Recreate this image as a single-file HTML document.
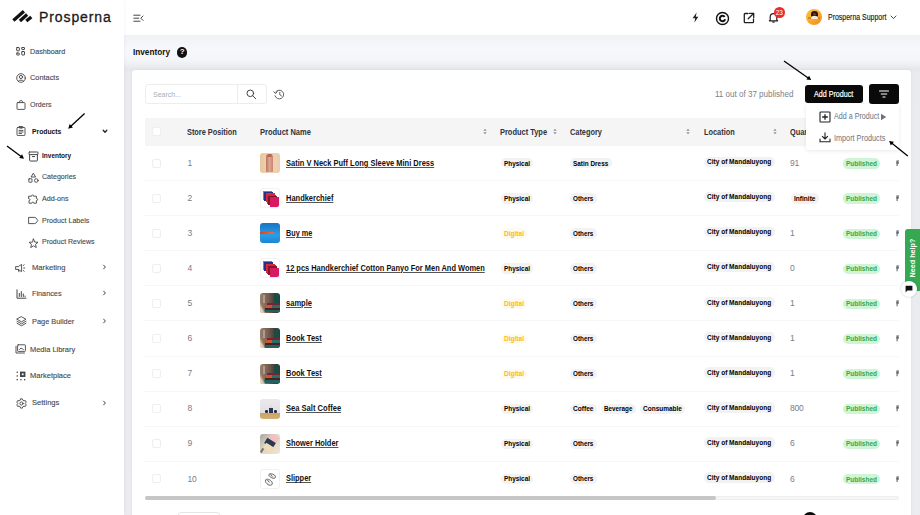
<!DOCTYPE html>
<html><head><meta charset="utf-8">
<style>
*{box-sizing:border-box;margin:0;padding:0}
html,body{width:920px;height:515px;overflow:hidden;background:#f0f1f5;font-family:"Liberation Sans",sans-serif;position:relative}
.abs{position:absolute}
#sidebar{position:absolute;left:0;top:0;width:124px;height:515px;background:#fff;box-shadow:1px 0 3px rgba(0,0,0,0.04)}
#header{position:absolute;left:124px;top:0;width:796px;height:34.5px;background:#fff}
#content{position:absolute;left:124px;top:34px;width:796px;height:481px;background:linear-gradient(#f0f1f5 0px,#f3f4f8 6px,#f7f8fb 16px,#f4f5f8 26px,#e6e7eb 35.5px,#eaebef 40px,#ebecf0 100%)}
.nav{position:absolute;height:10px;line-height:10px;color:#484848;white-space:nowrap;-webkit-text-stroke:0.12px #484848;transform-origin:0 50%}
.nav.b{font-weight:bold;color:#111;-webkit-text-stroke:0}
.ico{position:absolute}
#card{position:absolute;left:132px;top:70px;width:779px;height:460px;background:#fff;border-radius:3px;box-shadow:0 0 3px rgba(30,40,60,0.07)}
.th{position:absolute;font-size:8.4px;font-weight:bold;color:#2d3340;white-space:nowrap;line-height:10px;height:10px;transform-origin:0 50%}
.cell{position:absolute;white-space:nowrap;line-height:10px;height:10px}
.num{font-size:8.5px;letter-spacing:-0.2px;color:#777d88}
.pill{position:absolute;height:10.4px;line-height:10.4px;padding:0 0 0 3.2px;border-radius:5.2px;background:#f2f2f2;font-size:8.1px;font-weight:bold;color:#000;white-space:nowrap}
.pill span{display:inline-block;transform-origin:0 50%;position:relative;top:0.6px}
.pub{background:#cdf5d6;color:#33a852}
.dig{background:#fffaef;color:#fbb915}
.pname{position:absolute;font-size:8.7px;font-weight:bold;color:#111;text-decoration:underline;text-decoration-color:#555;text-decoration-thickness:0.8px;text-underline-offset:1px;white-space:nowrap;line-height:11px;height:11px;transform-origin:0 50%}
.cb{position:absolute;width:9px;height:9px;border:1px solid #efefef;border-radius:2px;background:#fff}
.sep{position:absolute;left:145px;width:754px;height:1px;background:#f6f6f6}
.thumb{position:absolute;left:260px;width:20px;height:20px;border-radius:3px;overflow:hidden}
</style></head>
<body>
<div id="content"></div>
<div id="header"></div>
<div id="sidebar"></div>
<svg class="ico" style="left:0;top:0" width="40" height="30" viewBox="0 0 40 30">
  <path d="M13.4 20.5 L23.9 11.3" stroke="#111" stroke-width="3.3"/>
  <path d="M19.9 20.9 L27.1 14.5" stroke="#111" stroke-width="3.3"/>
  <path d="M26.3 21.1 L31.3 16.9" stroke="#111" stroke-width="3.3"/>
</svg>
<div class="abs" style="left:39px;top:8px;font-size:14px;line-height:18px;color:#1a1a1a;letter-spacing:0.9px;-webkit-text-stroke:0.3px #1a1a1a">Prosperna</div>

<div class="nav" style="left:30px;top:46.5px;font-size:7.9px;transform:scaleX(0.9138)">Dashboard</div>
<svg class="ico" style="left:16px;top:46.5px" width="9" height="9" viewBox="0 0 9 9" fill="none" stroke="#444" stroke-width="1.0" stroke-linecap="round" stroke-linejoin="round"><rect x="0.7" y="0.5" width="2.6" height="3.3" rx="0.4"/><rect x="5.8" y="0.5" width="2.7" height="2" rx="0.4"/><rect x="0.7" y="6" width="2.6" height="2" rx="0.4"/><rect x="5.8" y="4.5" width="2.7" height="3.5" rx="0.4"/></svg>
<div class="nav" style="left:30px;top:73.4px;font-size:7.9px;transform:scaleX(0.9337)">Contacts</div>
<svg class="ico" style="left:16px;top:73px" width="10" height="10" viewBox="0 0 10 10" fill="none" stroke="#444" stroke-width="0.9" stroke-linecap="round" stroke-linejoin="round"><circle cx="5" cy="5" r="4.3"/><circle cx="5" cy="4" r="1.6"/><path d="M2.3 8.2 C3 6.6 7 6.6 7.7 8.2"/></svg>
<div class="nav" style="left:30px;top:99.9px;font-size:7.9px;transform:scaleX(0.8950)">Orders</div>
<svg class="ico" style="left:16px;top:99.5px" width="10" height="10" viewBox="0 0 10 10" fill="none" stroke="#444" stroke-width="0.9" stroke-linecap="round" stroke-linejoin="round"><rect x="1" y="2.6" width="8" height="6.8" rx="0.8"/><path d="M3.3 2.6 V1.8 C3.3 0.2 6.7 0.2 6.7 1.8 V2.6"/></svg>
<div class="nav b" style="left:32px;top:127.2px;font-size:8.0px;transform:scaleX(0.8478)">Products</div>
<svg class="ico" style="left:16px;top:126px" width="10" height="10" viewBox="0 0 10 10" fill="none" stroke="#444" stroke-width="0.9" stroke-linecap="round" stroke-linejoin="round"><rect x="1" y="1.4" width="8" height="8.2" rx="0.9"/><rect x="3.2" y="0.5" width="3.6" height="1.6" rx="0.4"/><path d="M3 4.4 H7 M3 6 H7 M3 7.6 H5.6"/></svg>
<svg class="ico" style="left:101.5px;top:128.8px" width="6" height="5" viewBox="0 0 6 5" fill="none" stroke="#222" stroke-width="1.3" stroke-linecap="round" stroke-linejoin="round"><path d="M1.2 1.3 L3 3.2 L4.8 1.3"/></svg>
<div class="nav b" style="left:42px;top:150.7px;font-size:8.0px;transform:scaleX(0.8111)">Inventory</div>
<svg class="ico" style="left:28px;top:150.5px" width="11" height="11" viewBox="0 0 11 11" fill="none" stroke="#444" stroke-width="1.0" stroke-linecap="round" stroke-linejoin="round"><rect x="1" y="1" width="9" height="2.6" rx="0.6"/><path d="M1.6 3.6 V9.4 C1.6 9.8 1.9 10 2.3 10 H8.7 C9.1 10 9.4 9.8 9.4 9.4 V3.6"/><path d="M4.3 5.6 H6.7"/></svg>
<div class="nav" style="left:42px;top:172.1px;font-size:7.9px;transform:scaleX(0.8928)">Categories</div>
<svg class="ico" style="left:28px;top:172.5px" width="11" height="10" viewBox="0 0 11 10" fill="none" stroke="#444" stroke-width="0.9" stroke-linecap="round" stroke-linejoin="round"><path d="M5.5 0.6 L7.6 4 H3.4 Z"/><rect x="0.8" y="5.8" width="3.2" height="3.4" rx="0.4"/><circle cx="8.3" cy="7.5" r="1.8"/></svg>
<div class="nav" style="left:42px;top:193.8px;font-size:7.9px;transform:scaleX(0.9039)">Add-ons</div>
<svg class="ico" style="left:28px;top:193.5px" width="11" height="10" viewBox="0 0 11 10" fill="none" stroke="#444" stroke-width="0.9" stroke-linecap="round" stroke-linejoin="round"><path d="M1 2.2 H3.6 C3.3 0.6 5.9 0.6 5.6 2.2 H8.4 V4.6 C10 4.3 10 6.9 8.4 6.6 V9.2 H5.8 C6.1 7.8 3.5 7.8 3.8 9.2 H1 V6.6 C2.4 6.9 2.4 4.3 1 4.6 Z"/></svg>
<div class="nav" style="left:42px;top:215.6px;font-size:7.9px;transform:scaleX(0.8996)">Product Labels</div>
<svg class="ico" style="left:28px;top:216px" width="11" height="9" viewBox="0 0 11 9" fill="none" stroke="#444" stroke-width="0.9" stroke-linecap="round" stroke-linejoin="round"><path d="M1 1.4 H6.8 C7.3 1.4 7.6 1.6 7.9 1.9 L9.8 4.5 L7.9 7.1 C7.6 7.4 7.3 7.6 6.8 7.6 H1 Z"/></svg>
<div class="nav" style="left:42px;top:237.1px;font-size:7.9px;transform:scaleX(0.8855)">Product Reviews</div>
<svg class="ico" style="left:28px;top:237.5px" width="11" height="11" viewBox="0 0 11 11" fill="none" stroke="#444" stroke-width="0.9" stroke-linecap="round" stroke-linejoin="round"><path d="M5.5 1 L6.8 4.1 L10 4.3 L7.5 6.4 L8.3 9.6 L5.5 7.8 L2.7 9.6 L3.5 6.4 L1 4.3 L4.2 4.1 Z"/></svg>
<div class="nav" style="left:31.7px;top:262.5px;font-size:7.9px;transform:scaleX(0.9688)">Marketing</div>
<svg class="ico" style="left:15px;top:262.5px" width="11" height="10" viewBox="0 0 11 10" fill="none" stroke="#444" stroke-width="0.9" stroke-linecap="round" stroke-linejoin="round"><path d="M1 3.6 H3.2 L6.6 1.4 V8.6 L3.2 6.4 H1 Z"/><path d="M3.2 6.4 L4 8.8"/><path d="M8.4 2.4 L9.2 1.8 M8.7 5 H9.8 M8.4 7.6 L9.2 8.2"/></svg>
<svg class="ico" style="left:102px;top:263.9px" width="5" height="6" viewBox="0 0 5 6" fill="none" stroke="#3a3a3a" stroke-width="0.95" stroke-linecap="round" stroke-linejoin="round"><path d="M1.6 1.1 L3.4 3 L1.6 4.9"/></svg>
<div class="nav" style="left:31.7px;top:289.0px;font-size:7.9px;transform:scaleX(0.9229)">Finances</div>
<svg class="ico" style="left:15.5px;top:289px" width="11" height="10" viewBox="0 0 11 10" fill="none" stroke="#444" stroke-width="1.0" stroke-linecap="round" stroke-linejoin="round"><path d="M1 0.8 V9.2 H10"/><path d="M3.3 7.5 V4.4 M5.3 7.5 V2.6 M7.3 7.5 V5 M9.1 7.5 V7"/></svg>
<svg class="ico" style="left:102px;top:290.4px" width="5" height="6" viewBox="0 0 5 6" fill="none" stroke="#3a3a3a" stroke-width="0.95" stroke-linecap="round" stroke-linejoin="round"><path d="M1.6 1.1 L3.4 3 L1.6 4.9"/></svg>
<div class="nav" style="left:31.7px;top:316.8px;font-size:7.9px;transform:scaleX(0.9353)">Page Builder</div>
<svg class="ico" style="left:15.5px;top:316px" width="11" height="11" viewBox="0 0 11 11" fill="none" stroke="#444" stroke-width="0.9" stroke-linecap="round" stroke-linejoin="round"><path d="M5.5 0.8 L10 3.3 L5.5 5.8 L1 3.3 Z"/><path d="M1 5.3 L5.5 7.8 L10 5.3"/><path d="M1 7.3 L5.5 9.8 L10 7.3"/></svg>
<svg class="ico" style="left:102px;top:318.2px" width="5" height="6" viewBox="0 0 5 6" fill="none" stroke="#3a3a3a" stroke-width="0.95" stroke-linecap="round" stroke-linejoin="round"><path d="M1.6 1.1 L3.4 3 L1.6 4.9"/></svg>
<div class="nav" style="left:29.9px;top:344.5px;font-size:7.9px;transform:scaleX(0.9462)">Media Library</div>
<svg class="ico" style="left:15px;top:344px" width="11" height="10" viewBox="0 0 11 10" fill="none" stroke="#444" stroke-width="0.9" stroke-linecap="round" stroke-linejoin="round"><path d="M1 2.3 V9 H9.5"/><rect x="2.6" y="0.8" width="7.8" height="6.6" rx="0.6"/><path d="M4.5 5.5 L6 4 L8.4 5.5"/></svg>
<div class="nav" style="left:29.9px;top:371.2px;font-size:7.9px;transform:scaleX(0.9531)">Marketplace</div>
<svg class="ico" style="left:16px;top:371px" width="10" height="10" viewBox="0 0 10 10"><g fill="#444"><rect x="0.6" y="0.6" width="1.3" height="1.3"/><rect x="0.6" y="4.3" width="1.3" height="1.3"/><rect x="0.6" y="8" width="1.3" height="1.3"/><rect x="4.3" y="8" width="1.3" height="1.3"/><rect x="8" y="8" width="1.3" height="1.3"/><rect x="4" y="0.6" width="5.4" height="5.4"/></g><rect x="5.8" y="2.4" width="1.8" height="1.8" fill="#fff"/></svg>
<div class="nav" style="left:31.7px;top:398.3px;font-size:7.9px;transform:scaleX(0.9594)">Settings</div>
<svg class="ico" style="left:15.5px;top:397.5px" width="11" height="11" viewBox="0 0 11 11" fill="none" stroke="#444" stroke-width="0.9" stroke-linecap="round" stroke-linejoin="round"><path d="M4.6 0.9 H6.4 L6.8 2.2 L8 2.9 L9.3 2.5 L10.2 4.1 L9.2 5.5 L10.2 6.9 L9.3 8.5 L8 8.1 L6.8 8.8 L6.4 10.1 H4.6 L4.2 8.8 L3 8.1 L1.7 8.5 L0.8 6.9 L1.8 5.5 L0.8 4.1 L1.7 2.5 L3 2.9 L4.2 2.2 Z"/><circle cx="5.5" cy="5.5" r="1.6"/></svg>
<svg class="ico" style="left:102px;top:399.7px" width="5" height="6" viewBox="0 0 5 6" fill="none" stroke="#3a3a3a" stroke-width="0.95" stroke-linecap="round" stroke-linejoin="round"><path d="M1.6 1.1 L3.4 3 L1.6 4.9"/></svg>
<svg class="ico" style="left:133px;top:14px" width="11" height="9" viewBox="0 0 11 9" fill="none" stroke="#444" stroke-width="1.0" stroke-linecap="round" stroke-linejoin="round"><path d="M0.8 1.2 H7 M0.8 4.2 H5.8 M0.8 7.2 H7"/><path d="M10 2 L7.8 4.2 L10 6.4"/></svg>
<svg class="ico" style="left:691px;top:12px" width="9" height="11" viewBox="0 0 9 11"><path d="M5.6 0.6 L1.6 6.2 H4.2 L3.4 10.4 L7.4 4.8 H4.8 Z" fill="#222"/></svg>
<svg class="ico" style="left:714.5px;top:10.5px" width="15" height="15" viewBox="0 0 15 15" fill="none" stroke="#111"><circle cx="7.5" cy="7.5" r="6" stroke-width="1.4"/><path d="M9.71 5.95 A2.7 2.7 0 1 0 10.11 8.2" stroke-width="2.0"/></svg>
<svg class="ico" style="left:743px;top:11.5px" width="12" height="12" viewBox="0 0 12 12" fill="none" stroke="#222" stroke-width="1.3" stroke-linecap="round" stroke-linejoin="round"><path d="M5 1.5 H2 C1.6 1.5 1.3 1.8 1.3 2.2 V10 C1.3 10.4 1.6 10.7 2 10.7 H9.8 C10.2 10.7 10.5 10.4 10.5 10 V7"/><path d="M6.5 1.3 H10.7 V5.5"/><path d="M10.5 1.5 L5.2 6.8"/></svg>
<svg class="ico" style="left:768px;top:12px" width="11" height="11" viewBox="0 0 11 11" fill="none" stroke="#222" stroke-width="1.2" stroke-linejoin="round"><path d="M2.2 8.2 V5 C2.2 3 3.6 1.6 5.5 1.6 C7.4 1.6 8.8 3 8.8 5 V8.2 L9.6 8.8 H1.4 Z"/><path d="M4.4 9.6 C4.6 10.3 6.4 10.3 6.6 9.6"/></svg>
<div class="abs" style="left:773.8px;top:7.2px;width:10.8px;height:10.8px;border-radius:50%;background:#ee2b2b;color:#fff;font-size:6.5px;line-height:11px;text-align:center;letter-spacing:-0.2px">23</div>
<div class="abs" style="left:806.2px;top:9px;width:16px;height:16px;border-radius:50%;background:linear-gradient(135deg,#fcc63c,#f9a52a 55%,#f58a1c);overflow:hidden"><div class="abs" style="left:2px;top:8.4px;width:12px;height:1.2px;background:rgba(170,110,40,0.55)"></div><div class="abs" style="left:4.8px;top:1.8px;width:6.6px;height:6.8px;border-radius:50% 50% 40% 40%;background:#2a140e"></div><div class="abs" style="left:6.6px;top:3.6px;width:3.2px;height:3.6px;border-radius:40%;background:#6a3820"></div><div class="abs" style="left:5.2px;top:7.4px;width:6.2px;height:3px;border-radius:2px 2px 1px 1px;background:rgba(255,250,235,0.92)"></div></div>
<div class="abs" style="left:828.00px;top:13.34px;font-size:8.2px;line-height:9.84px;color:#222;white-space:nowrap;transform:scaleX(0.8513);transform-origin:0 50%;-webkit-text-stroke:0.15px #222">Prosperna Support</div>
<svg class="ico" style="left:890.3px;top:15px" width="7" height="5" viewBox="0 0 7 5" fill="none" stroke="#333" stroke-width="0.9" stroke-linecap="round" stroke-linejoin="round"><path d="M1 1 L3.5 3.5 L6 1"/></svg>
<div class="abs" style="left:133.00px;top:46.89px;font-size:9.2px;line-height:11.04px;font-weight:bold;color:#111;white-space:nowrap;transform:scaleX(0.8937);transform-origin:0 50%;">Inventory</div>
<div class="abs" style="left:177px;top:47.2px;width:10.4px;height:10.4px;border-radius:50%;background:#111;color:#fff;font-size:8px;line-height:10.4px;text-align:center;font-weight:bold">?</div>
<div id="card"></div>
<div class="abs" style="left:145px;top:84px;width:122px;height:20px;border:1px solid #ededed;border-radius:3px;background:#fff"></div>
<div class="abs" style="left:237px;top:84px;width:1px;height:20px;background:#ededed"></div>
<div class="abs" style="left:153.30px;top:89.62px;font-size:7.8px;line-height:9.36px;color:#a9aeb6;white-space:nowrap;transform:scaleX(0.8974);transform-origin:0 50%;">Search...</div>
<svg class="ico" style="left:246px;top:89px" width="11" height="11" viewBox="0 0 11 11" fill="none" stroke="#444" stroke-width="1.0" stroke-linecap="round"><circle cx="4.3" cy="4.3" r="3.3"/><path d="M6.8 6.8 L9.8 9.8"/></svg>
<svg class="ico" style="left:272.5px;top:88.5px" width="12" height="11" viewBox="0 0 12 11" fill="none" stroke="#555" stroke-width="0.95" stroke-linecap="round" stroke-linejoin="round"><path d="M2.6 3 A4.4 4.4 0 1 1 2 6.8"/><path d="M0.8 2.8 L2.6 4.6 L4.2 2.6"/><path d="M6.8 3.2 V5.8 L8.4 6.8"/></svg>
<div class="abs" style="left:714.80px;top:88.75px;font-size:8.5px;line-height:10.20px;color:#7a808a;white-space:nowrap;transform:scaleX(0.9458);transform-origin:0 50%;">11 out of 37 published</div>
<div class="abs" style="left:805px;top:85px;width:58px;height:18px;border-radius:3px;background:#0a0a0a"></div>
<div class="abs" style="left:814.40px;top:89.64px;font-size:8.3px;line-height:9.96px;color:#fff;white-space:nowrap;transform:scaleX(0.8579);transform-origin:0 50%;-webkit-text-stroke:0.2px #fff">Add Product</div>
<div class="abs" style="left:869px;top:84px;width:30px;height:20px;border-radius:3px;background:#0a0a0a"></div>
<svg class="ico" style="left:878px;top:89px" width="12" height="10" viewBox="0 0 12 10" stroke="#fff" stroke-width="1.2" stroke-linecap="round"><path d="M1.5 2 H10.5 M3.3 5 H8.7 M5 8 H7"/></svg>
<div class="abs" style="left:145px;top:118px;width:754px;height:27.5px;background:#f5f5f5"></div>
<div class="cb" style="left:152px;top:127px"></div>
<div class="th" style="left:186.7px;top:127.4px;transform:scaleX(0.8779)">Store Position</div>
<div class="th" style="left:259.7px;top:127.4px;transform:scaleX(0.8955)">Product Name</div>
<div class="th" style="left:499.7px;top:127.4px;transform:scaleX(0.8898)">Product Type</div>
<div class="th" style="left:569.7px;top:127.4px;transform:scaleX(0.8788)">Category</div>
<div class="th" style="left:703.7px;top:127.4px;transform:scaleX(0.8789)">Location</div>
<div class="th" style="left:789.7px;top:127.4px;transform:scaleX(0.8789)">Quantity</div>
<svg class="ico" style="left:483px;top:128px" width="4" height="7" viewBox="0 0 4 7" fill="#8a8f98"><path d="M0.3 2.8 L2 0.8 L3.7 2.8 Z M0.3 4.2 L2 6.2 L3.7 4.2 Z"/></svg>
<svg class="ico" style="left:553px;top:128px" width="4" height="7" viewBox="0 0 4 7" fill="#8a8f98"><path d="M0.3 2.8 L2 0.8 L3.7 2.8 Z M0.3 4.2 L2 6.2 L3.7 4.2 Z"/></svg>
<svg class="ico" style="left:686px;top:128px" width="4" height="7" viewBox="0 0 4 7" fill="#8a8f98"><path d="M0.3 2.8 L2 0.8 L3.7 2.8 Z M0.3 4.2 L2 6.2 L3.7 4.2 Z"/></svg>
<svg class="ico" style="left:772.5px;top:128px" width="4" height="7" viewBox="0 0 4 7" fill="#8a8f98"><path d="M0.3 2.8 L2 0.8 L3.7 2.8 Z M0.3 4.2 L2 6.2 L3.7 4.2 Z"/></svg>
<div class="cb" style="left:152px;top:158.5px"></div>
<div class="cell num" style="left:187.5px;top:157.8px">1</div>
<div class="thumb" style="top:153.0px;background:linear-gradient(90deg,#e9c59f,#f0d3b4 50%,#ecccaa)"><div class="abs" style="left:6px;top:1px;width:7px;height:18px;border-radius:3px 3px 1px 1px;background:linear-gradient(90deg,#b9745f,#dba593 50%,#c68672)"></div><div class="abs" style="left:7px;top:0.5px;width:5px;height:3px;border-radius:2px;background:#b86a4a"></div></div>
<div class="pname" style="left:285.7px;top:157.7px;transform:scaleX(0.8621)">Satin V Neck Puff Long Sleeve Mini Dress</div>
<div class="pill " style="left:500.8px;top:158.1px;width:32.60px"><span style="transform:scaleX(0.7906)">Physical</span></div>
<div class="pill " style="left:570px;top:158.1px;width:41.90px"><span style="transform:scaleX(0.7916)">Satin Dress</span></div>
<div class="pill " style="left:704px;top:156.7px;width:70.85px"><span style="transform:scaleX(0.8065)">City of Mandaluyong</span></div>
<div class="cell num" style="left:790px;top:157.8px">91</div>
<div class="pill pub" style="left:842.5px;top:158.3px;width:37.60px"><span style="transform:scaleX(0.8007)">Published</span></div>
<svg class="ico" style="left:895.5px;top:159.8px" width="4" height="6.5" viewBox="0 0 4 6.5"><path d="M0.4 0.4 H3.7 V1.5 H1.6 V2.3 H3.2 V3.4 H1.6 V6.2 H0.6 V3.4 H0.2 V2.3 H0.6 V1.5 H0.4 Z" fill="#4f5560"/></svg>
<div class="sep" style="top:180.1px"></div>
<div class="cb" style="left:152px;top:193.6px"></div>
<div class="cell num" style="left:187.5px;top:192.9px">2</div>
<div class="thumb" style="top:188.1px;background:#fff;border:1px solid #f2f2f2"><div class="abs" style="left:1.5px;top:1.5px;width:9px;height:9px;background:#e8546f"></div><div class="abs" style="left:3.2px;top:3px;width:9px;height:9px;background:#24308a"></div><div class="abs" style="left:4.6px;top:4.4px;width:9px;height:9px;background:#dd2a3a"></div><div class="abs" style="left:6px;top:5.8px;width:9px;height:9px;background:#1b6b9c"></div><div class="abs" style="left:7.4px;top:7.2px;width:9px;height:9px;background:#7c1a2c"></div><div class="abs" style="left:8.5px;top:8.4px;width:9.5px;height:9.5px;background:#d81b60"></div></div>
<div class="pname" style="left:285.7px;top:192.8px;transform:scaleX(0.8612)">Handkerchief</div>
<div class="pill " style="left:500.8px;top:193.2px;width:32.60px"><span style="transform:scaleX(0.7906)">Physical</span></div>
<div class="pill " style="left:570px;top:193.2px;width:27.00px"><span style="transform:scaleX(0.7809)">Others</span></div>
<div class="pill " style="left:704px;top:191.8px;width:70.85px"><span style="transform:scaleX(0.8065)">City of Mandaluyong</span></div>
<div class="pill " style="left:790.5px;top:193.2px;width:28.10px"><span style="transform:scaleX(0.8105)">Infinite</span></div>
<div class="pill pub" style="left:842.5px;top:193.4px;width:37.60px"><span style="transform:scaleX(0.8007)">Published</span></div>
<svg class="ico" style="left:895.5px;top:194.9px" width="4" height="6.5" viewBox="0 0 4 6.5"><path d="M0.4 0.4 H3.7 V1.5 H1.6 V2.3 H3.2 V3.4 H1.6 V6.2 H0.6 V3.4 H0.2 V2.3 H0.6 V1.5 H0.4 Z" fill="#4f5560"/></svg>
<div class="sep" style="top:215.2px"></div>
<div class="cb" style="left:152px;top:228.7px"></div>
<div class="cell num" style="left:187.5px;top:228.0px">3</div>
<div class="thumb" style="top:223.2px;background:linear-gradient(#1a74c2,#2a9de6 60%,#1c86d4)"><div class="abs" style="left:0;top:8.5px;width:15px;height:2.4px;background:linear-gradient(90deg,#e2401d,#f2703a);clip-path:polygon(0 0,80% 0,100% 50%,80% 100%,0 100%)"></div></div>
<div class="pname" style="left:285.7px;top:227.9px;transform:scaleX(0.8342)">Buy me</div>
<div class="pill dig" style="left:500.8px;top:228.3px;width:26.60px"><span style="transform:scaleX(0.8082)">Digital</span></div>
<div class="pill " style="left:570px;top:228.3px;width:27.00px"><span style="transform:scaleX(0.7809)">Others</span></div>
<div class="pill " style="left:704px;top:226.9px;width:70.85px"><span style="transform:scaleX(0.8065)">City of Mandaluyong</span></div>
<div class="cell num" style="left:790px;top:228.0px">1</div>
<div class="pill pub" style="left:842.5px;top:228.5px;width:37.60px"><span style="transform:scaleX(0.8007)">Published</span></div>
<svg class="ico" style="left:895.5px;top:230.0px" width="4" height="6.5" viewBox="0 0 4 6.5"><path d="M0.4 0.4 H3.7 V1.5 H1.6 V2.3 H3.2 V3.4 H1.6 V6.2 H0.6 V3.4 H0.2 V2.3 H0.6 V1.5 H0.4 Z" fill="#4f5560"/></svg>
<div class="sep" style="top:250.2px"></div>
<div class="cb" style="left:152px;top:263.7px"></div>
<div class="cell num" style="left:187.5px;top:263.0px">4</div>
<div class="thumb" style="top:258.2px;background:#fff;border:1px solid #f2f2f2"><div class="abs" style="left:1.5px;top:1.5px;width:9px;height:9px;background:#e8546f"></div><div class="abs" style="left:3.2px;top:3px;width:9px;height:9px;background:#24308a"></div><div class="abs" style="left:4.6px;top:4.4px;width:9px;height:9px;background:#dd2a3a"></div><div class="abs" style="left:6px;top:5.8px;width:9px;height:9px;background:#1b6b9c"></div><div class="abs" style="left:7.4px;top:7.2px;width:9px;height:9px;background:#7c1a2c"></div><div class="abs" style="left:8.5px;top:8.4px;width:9.5px;height:9.5px;background:#d81b60"></div></div>
<div class="pname" style="left:285.7px;top:262.9px;transform:scaleX(0.8559)">12 pcs Handkerchief Cotton Panyo For Men And Women</div>
<div class="pill " style="left:500.8px;top:263.3px;width:32.60px"><span style="transform:scaleX(0.7906)">Physical</span></div>
<div class="pill " style="left:570px;top:263.3px;width:27.00px"><span style="transform:scaleX(0.7809)">Others</span></div>
<div class="pill " style="left:704px;top:261.9px;width:70.85px"><span style="transform:scaleX(0.8065)">City of Mandaluyong</span></div>
<div class="cell num" style="left:790px;top:263.0px">0</div>
<div class="pill pub" style="left:842.5px;top:263.5px;width:37.60px"><span style="transform:scaleX(0.8007)">Published</span></div>
<svg class="ico" style="left:895.5px;top:265.0px" width="4" height="6.5" viewBox="0 0 4 6.5"><path d="M0.4 0.4 H3.7 V1.5 H1.6 V2.3 H3.2 V3.4 H1.6 V6.2 H0.6 V3.4 H0.2 V2.3 H0.6 V1.5 H0.4 Z" fill="#4f5560"/></svg>
<div class="sep" style="top:285.3px"></div>
<div class="cb" style="left:152px;top:298.8px"></div>
<div class="cell num" style="left:187.5px;top:298.1px">5</div>
<div class="thumb" style="top:293.3px;background:linear-gradient(90deg,#9a8070 0,#735a4c 45%,#4a3f3a 70%,#22403c 100%)"><div class="abs" style="left:14px;top:1px;width:5px;height:9px;background:#1c4a45"></div><div class="abs" style="left:3px;top:2px;width:2px;height:8px;background:#b09a8a"></div><div class="abs" style="left:6.5px;top:9.5px;width:13.5px;height:2px;background:#7a2232"></div><div class="abs" style="left:5.5px;top:11.8px;width:14.5px;height:2.6px;background:linear-gradient(90deg,#c4592e 40%,#2c6c66 40%)"></div><div class="abs" style="left:4.5px;top:14.6px;width:15.5px;height:1.8px;background:#4a2028"></div><div class="abs" style="left:3.5px;top:16.6px;width:16.5px;height:2.6px;background:#25625b"></div><div class="abs" style="left:0;top:10px;width:5px;height:10px;background:linear-gradient(60deg,#e8d4b8 0,#e8d4b8 30%,transparent 60%)"></div></div>
<div class="pname" style="left:285.7px;top:298.0px;transform:scaleX(0.8675)">sample</div>
<div class="pill dig" style="left:500.8px;top:298.4px;width:26.60px"><span style="transform:scaleX(0.8082)">Digital</span></div>
<div class="pill " style="left:570px;top:298.4px;width:27.00px"><span style="transform:scaleX(0.7809)">Others</span></div>
<div class="pill " style="left:704px;top:297.0px;width:70.85px"><span style="transform:scaleX(0.8065)">City of Mandaluyong</span></div>
<div class="cell num" style="left:790px;top:298.1px">1</div>
<div class="pill pub" style="left:842.5px;top:298.6px;width:37.60px"><span style="transform:scaleX(0.8007)">Published</span></div>
<svg class="ico" style="left:895.5px;top:300.1px" width="4" height="6.5" viewBox="0 0 4 6.5"><path d="M0.4 0.4 H3.7 V1.5 H1.6 V2.3 H3.2 V3.4 H1.6 V6.2 H0.6 V3.4 H0.2 V2.3 H0.6 V1.5 H0.4 Z" fill="#4f5560"/></svg>
<div class="sep" style="top:320.4px"></div>
<div class="cb" style="left:152px;top:333.9px"></div>
<div class="cell num" style="left:187.5px;top:333.2px">6</div>
<div class="thumb" style="top:328.4px;background:linear-gradient(90deg,#9a8070 0,#735a4c 45%,#4a3f3a 70%,#22403c 100%)"><div class="abs" style="left:14px;top:1px;width:5px;height:9px;background:#1c4a45"></div><div class="abs" style="left:3px;top:2px;width:2px;height:8px;background:#b09a8a"></div><div class="abs" style="left:6.5px;top:9.5px;width:13.5px;height:2px;background:#7a2232"></div><div class="abs" style="left:5.5px;top:11.8px;width:14.5px;height:2.6px;background:linear-gradient(90deg,#c4592e 40%,#2c6c66 40%)"></div><div class="abs" style="left:4.5px;top:14.6px;width:15.5px;height:1.8px;background:#4a2028"></div><div class="abs" style="left:3.5px;top:16.6px;width:16.5px;height:2.6px;background:#25625b"></div><div class="abs" style="left:0;top:10px;width:5px;height:10px;background:linear-gradient(60deg,#e8d4b8 0,#e8d4b8 30%,transparent 60%)"></div></div>
<div class="pname" style="left:285.7px;top:333.1px;transform:scaleX(0.8645)">Book Test</div>
<div class="pill dig" style="left:500.8px;top:333.5px;width:26.60px"><span style="transform:scaleX(0.8082)">Digital</span></div>
<div class="pill " style="left:570px;top:333.5px;width:27.00px"><span style="transform:scaleX(0.7809)">Others</span></div>
<div class="pill " style="left:704px;top:332.1px;width:70.85px"><span style="transform:scaleX(0.8065)">City of Mandaluyong</span></div>
<div class="cell num" style="left:790px;top:333.2px">1</div>
<div class="pill pub" style="left:842.5px;top:333.7px;width:37.60px"><span style="transform:scaleX(0.8007)">Published</span></div>
<svg class="ico" style="left:895.5px;top:335.2px" width="4" height="6.5" viewBox="0 0 4 6.5"><path d="M0.4 0.4 H3.7 V1.5 H1.6 V2.3 H3.2 V3.4 H1.6 V6.2 H0.6 V3.4 H0.2 V2.3 H0.6 V1.5 H0.4 Z" fill="#4f5560"/></svg>
<div class="sep" style="top:355.5px"></div>
<div class="cb" style="left:152px;top:369.0px"></div>
<div class="cell num" style="left:187.5px;top:368.3px">7</div>
<div class="thumb" style="top:363.5px;background:linear-gradient(90deg,#9a8070 0,#735a4c 45%,#4a3f3a 70%,#22403c 100%)"><div class="abs" style="left:14px;top:1px;width:5px;height:9px;background:#1c4a45"></div><div class="abs" style="left:3px;top:2px;width:2px;height:8px;background:#b09a8a"></div><div class="abs" style="left:6.5px;top:9.5px;width:13.5px;height:2px;background:#7a2232"></div><div class="abs" style="left:5.5px;top:11.8px;width:14.5px;height:2.6px;background:linear-gradient(90deg,#c4592e 40%,#2c6c66 40%)"></div><div class="abs" style="left:4.5px;top:14.6px;width:15.5px;height:1.8px;background:#4a2028"></div><div class="abs" style="left:3.5px;top:16.6px;width:16.5px;height:2.6px;background:#25625b"></div><div class="abs" style="left:0;top:10px;width:5px;height:10px;background:linear-gradient(60deg,#e8d4b8 0,#e8d4b8 30%,transparent 60%)"></div></div>
<div class="pname" style="left:285.7px;top:368.2px;transform:scaleX(0.8645)">Book Test</div>
<div class="pill dig" style="left:500.8px;top:368.6px;width:26.60px"><span style="transform:scaleX(0.8082)">Digital</span></div>
<div class="pill " style="left:570px;top:368.6px;width:27.00px"><span style="transform:scaleX(0.7809)">Others</span></div>
<div class="pill " style="left:704px;top:367.2px;width:70.85px"><span style="transform:scaleX(0.8065)">City of Mandaluyong</span></div>
<div class="cell num" style="left:790px;top:368.3px">1</div>
<div class="pill pub" style="left:842.5px;top:368.8px;width:37.60px"><span style="transform:scaleX(0.8007)">Published</span></div>
<svg class="ico" style="left:895.5px;top:370.3px" width="4" height="6.5" viewBox="0 0 4 6.5"><path d="M0.4 0.4 H3.7 V1.5 H1.6 V2.3 H3.2 V3.4 H1.6 V6.2 H0.6 V3.4 H0.2 V2.3 H0.6 V1.5 H0.4 Z" fill="#4f5560"/></svg>
<div class="sep" style="top:390.6px"></div>
<div class="cb" style="left:152px;top:404.1px"></div>
<div class="cell num" style="left:187.5px;top:403.4px">8</div>
<div class="thumb" style="top:398.6px;background:linear-gradient(#ebe9ed 0,#e2e0e4 68%,#c9a262 68%,#d4b078)"><div class="abs" style="left:9px;top:6px;width:3px;height:3px;background:#dde"></div><div class="abs" style="left:8.5px;top:9px;width:4px;height:5px;background:#2b3a52"></div><div class="abs" style="left:4.5px;top:11.5px;width:3.5px;height:2.5px;border-radius:50%;background:#1e2430"></div><div class="abs" style="left:13.5px;top:11.5px;width:3.5px;height:2.5px;border-radius:50%;background:#1e2430"></div></div>
<div class="pname" style="left:285.7px;top:403.3px;transform:scaleX(0.8715)">Sea Salt Coffee</div>
<div class="pill " style="left:500.8px;top:403.7px;width:32.60px"><span style="transform:scaleX(0.7906)">Physical</span></div>
<div class="pill " style="left:570px;top:403.7px;width:27.10px"><span style="transform:scaleX(0.8138)">Coffee</span></div>
<div class="pill " style="left:600.9px;top:403.7px;width:35.10px"><span style="transform:scaleX(0.7810)">Beverage</span></div>
<div class="pill " style="left:639.6999999999999px;top:403.7px;width:45.60px"><span style="transform:scaleX(0.8025)">Consumable</span></div>
<div class="pill " style="left:704px;top:402.3px;width:70.85px"><span style="transform:scaleX(0.8065)">City of Mandaluyong</span></div>
<div class="cell num" style="left:790px;top:403.4px">800</div>
<div class="pill pub" style="left:842.5px;top:403.9px;width:37.60px"><span style="transform:scaleX(0.8007)">Published</span></div>
<svg class="ico" style="left:895.5px;top:405.4px" width="4" height="6.5" viewBox="0 0 4 6.5"><path d="M0.4 0.4 H3.7 V1.5 H1.6 V2.3 H3.2 V3.4 H1.6 V6.2 H0.6 V3.4 H0.2 V2.3 H0.6 V1.5 H0.4 Z" fill="#4f5560"/></svg>
<div class="sep" style="top:425.6px"></div>
<div class="cb" style="left:152px;top:439.1px"></div>
<div class="cell num" style="left:187.5px;top:438.4px">9</div>
<div class="thumb" style="top:433.6px;background:linear-gradient(135deg,#a8a49c,#ded6ca 45%,#eee4d2)"><div class="abs" style="left:9px;top:1px;width:9px;height:8px;background:#f2c0c0;transform:rotate(32deg)"></div><div class="abs" style="left:5px;top:6px;width:10px;height:6px;background:#2c3850;transform:rotate(32deg)"></div><div class="abs" style="left:4px;top:11px;width:10px;height:6px;background:#ecdcb8;transform:rotate(32deg)"></div><div class="abs" style="left:1px;top:14px;width:2px;height:5px;background:#776;transform:rotate(32deg)"></div></div>
<div class="pname" style="left:285.7px;top:438.3px;transform:scaleX(0.8553)">Shower Holder</div>
<div class="pill " style="left:500.8px;top:438.7px;width:32.60px"><span style="transform:scaleX(0.7906)">Physical</span></div>
<div class="pill " style="left:570px;top:438.7px;width:27.00px"><span style="transform:scaleX(0.7809)">Others</span></div>
<div class="pill " style="left:704px;top:437.3px;width:70.85px"><span style="transform:scaleX(0.8065)">City of Mandaluyong</span></div>
<div class="cell num" style="left:790px;top:438.4px">6</div>
<div class="pill pub" style="left:842.5px;top:438.9px;width:37.60px"><span style="transform:scaleX(0.8007)">Published</span></div>
<svg class="ico" style="left:895.5px;top:440.4px" width="4" height="6.5" viewBox="0 0 4 6.5"><path d="M0.4 0.4 H3.7 V1.5 H1.6 V2.3 H3.2 V3.4 H1.6 V6.2 H0.6 V3.4 H0.2 V2.3 H0.6 V1.5 H0.4 Z" fill="#4f5560"/></svg>
<div class="sep" style="top:460.7px"></div>
<div class="cb" style="left:152px;top:474.2px"></div>
<div class="cell num" style="left:187.5px;top:473.5px">10</div>
<div class="thumb" style="top:468.7px;background:#fff;border:1px solid #f0f0f0"><svg class="abs" style="left:1px;top:1px" width="18" height="18" viewBox="0 0 18 18" fill="#f4f4f4" stroke="#666" stroke-width="1"><path d="M7 3.2 C9 2 12.6 3.4 13.4 5.2 C14 6.6 12.6 7.6 11 7.2 C9.4 6.8 7.6 5.8 7 4.6 Z"/><path d="M3.8 8.6 C6 7.4 9.6 9.4 10.2 11.6 C10.8 13.6 9 14.8 7.4 14.2 C5.6 13.6 3.8 12 3.4 10.4 Z"/><path d="M8.6 3.6 L10.4 5.6 M5.4 9 L7.4 11.4" fill="none"/></svg></div>
<div class="pname" style="left:285.7px;top:473.4px;transform:scaleX(0.8544)">Slipper</div>
<div class="pill " style="left:500.8px;top:473.8px;width:32.60px"><span style="transform:scaleX(0.7906)">Physical</span></div>
<div class="pill " style="left:570px;top:473.8px;width:27.00px"><span style="transform:scaleX(0.7809)">Others</span></div>
<div class="pill " style="left:704px;top:472.4px;width:70.85px"><span style="transform:scaleX(0.8065)">City of Mandaluyong</span></div>
<div class="cell num" style="left:790px;top:473.5px">6</div>
<div class="pill pub" style="left:842.5px;top:474.0px;width:37.60px"><span style="transform:scaleX(0.8007)">Published</span></div>
<svg class="ico" style="left:895.5px;top:475.5px" width="4" height="6.5" viewBox="0 0 4 6.5"><path d="M0.4 0.4 H3.7 V1.5 H1.6 V2.3 H3.2 V3.4 H1.6 V6.2 H0.6 V3.4 H0.2 V2.3 H0.6 V1.5 H0.4 Z" fill="#4f5560"/></svg>
<div class="abs" style="left:899px;top:118px;width:12px;height:380px;background:#fff"></div>
<div class="abs" style="left:145px;top:496px;width:754px;height:4px;border-radius:2px;background:#f6f6f6;border:1px solid #eeeeee"></div>
<div class="abs" style="left:145px;top:496px;width:571px;height:4px;border-radius:2px;background:#c6c6c6"></div>
<div class="abs" style="left:177.5px;top:511.5px;width:42px;height:14px;border:1px solid #e6e6e6;border-radius:3px;background:#fff"></div>
<div class="abs" style="left:803px;top:511.5px;width:14px;height:14px;border-radius:50%;background:#0a0a0a"></div>
<div class="abs" style="left:806px;top:104px;width:93px;height:46px;background:#fff;border-radius:2px;box-shadow:0 1px 4px rgba(0,0,0,0.09)"></div>
<svg class="ico" style="left:819px;top:111px" width="12" height="12" viewBox="0 0 12 12" fill="none" stroke="#222" stroke-width="1.1"><rect x="1" y="1" width="10" height="10" rx="0.8"/><path d="M6 3.2 V8.8 M3.2 6 H8.8" stroke-width="1.3"/></svg>
<div class="abs" style="left:834.00px;top:112.44px;font-size:8.2px;line-height:9.84px;color:#6b7280;white-space:nowrap;transform:scaleX(0.8733);transform-origin:0 50%;">Add a Product</div>
<svg class="ico" style="left:880px;top:112.5px" width="7" height="8" viewBox="0 0 7 8"><path d="M1 0.8 L6.2 4 L1 7.2 Z" fill="#6b7280"/></svg>
<svg class="ico" style="left:819px;top:132px" width="12" height="11" viewBox="0 0 12 11" fill="none" stroke="#222" stroke-width="1.1" stroke-linecap="round" stroke-linejoin="round"><path d="M6 0.8 V6.8 M3.4 4.4 L6 7 L8.6 4.4"/><path d="M1 7 V9.8 H11 V7"/></svg>
<div class="abs" style="left:834.00px;top:133.64px;font-size:8.2px;line-height:9.84px;color:#6b7280;white-space:nowrap;transform:scaleX(0.8879);transform-origin:0 50%;">Import Products</div>
<div class="abs" style="left:905px;top:229px;width:16px;height:62px;border-radius:3px 0 0 3px;background:#36a852"></div>
<div class="abs" style="left:875px;top:253px;width:75px;height:10px;line-height:10px;text-align:center;transform:rotate(-90deg);color:#fff;font-size:7.2px;font-weight:bold;white-space:nowrap">Need help?</div>
<div class="abs" style="left:900.5px;top:281px;width:16px;height:16px;border-radius:50%;background:#fff;box-shadow:0 0 2px rgba(0,0,0,0.25)"></div>
<svg class="ico" style="left:904.5px;top:285px" width="8" height="8" viewBox="0 0 8 8"><path d="M0.6 0.8 H7.4 V5.6 H2.4 L0.6 7.4 Z" fill="#111"/></svg>
<svg class="ico" style="left:0;top:0" width="920" height="515" viewBox="0 0 920 515"><path d="M784.00 61.00 L808.58 78.17" stroke="#000" stroke-width="1.3"/><path d="M811.20 80.00 L806.38 79.56 L809.13 75.63 Z" fill="#000"/><path d="M84.60 113.60 L70.55 126.53" stroke="#000" stroke-width="1.3"/><path d="M68.20 128.70 L69.66 124.09 L72.92 127.62 Z" fill="#000"/><path d="M7.00 146.00 L21.44 156.78" stroke="#000" stroke-width="1.3"/><path d="M24.00 158.70 L19.20 158.11 L22.07 154.26 Z" fill="#000"/><path d="M907.80 156.10 L891.58 142.92" stroke="#000" stroke-width="1.3"/><path d="M889.10 140.90 L893.87 141.69 L890.85 145.41 Z" fill="#000"/></svg>
</body></html>
